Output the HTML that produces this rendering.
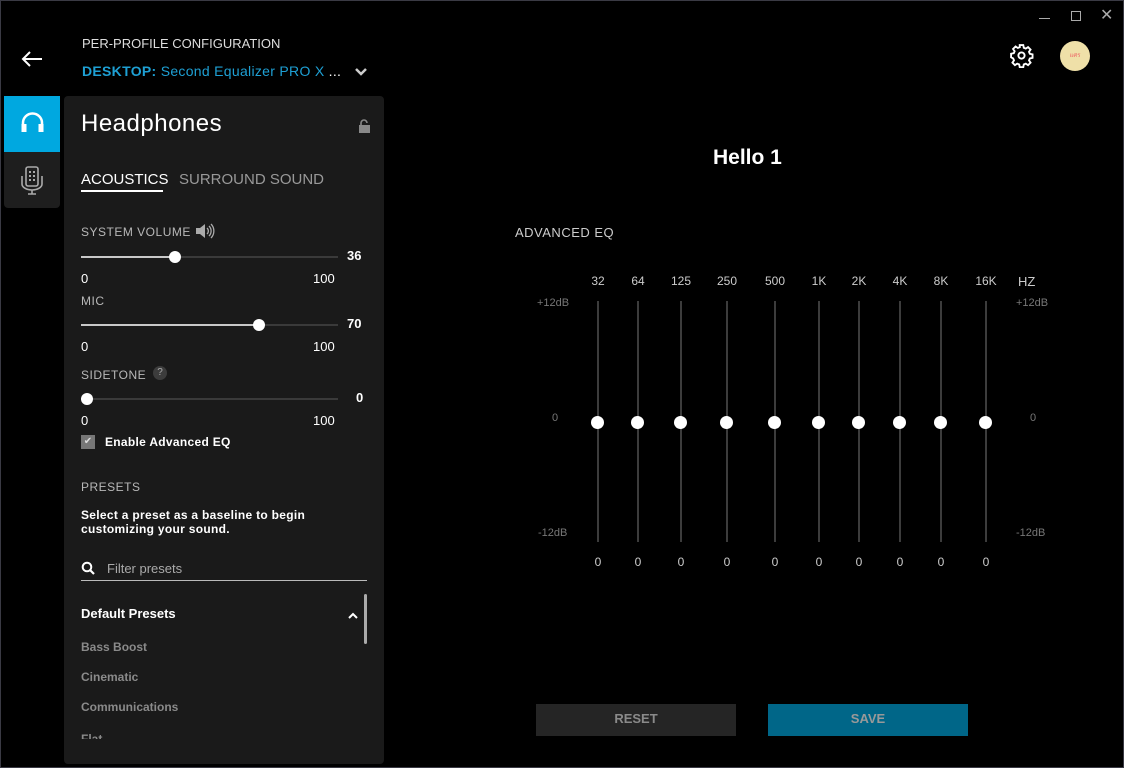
<!DOCTYPE html>
<html><head><meta charset="utf-8"><style>
*{margin:0;padding:0;box-sizing:border-box}
body{width:1124px;height:768px;background:#000;font-family:"Liberation Sans",sans-serif;position:relative;overflow:hidden;color:#fff}
.a{position:absolute;white-space:nowrap}
.frame{position:absolute;left:0;top:0;width:1124px;height:768px;border:1px solid #3a3a44;pointer-events:none}
.panel{position:absolute;left:64px;top:96px;width:320px;height:668px;background:#1a1a1a;border-radius:4px}
.lbl{font-size:12px;color:#b8b8b8;letter-spacing:.5px}
.num{font-size:13px;color:#fff}
.trk{position:absolute;height:2px;background:#3a3a3a}
.fill{position:absolute;height:2px;background:#c8c8c8}
.knob{position:absolute;width:12px;height:12px;border-radius:50%;background:#fff}
.eqt{position:absolute;top:301px;width:2px;height:241px;background:#3c3c3c}
.eqk{position:absolute;top:416px;width:13px;height:13px;border-radius:50%;background:#fff}
.fq{position:absolute;top:274px;font-size:12px;color:#ccc;transform:translateX(-50%)}
.zv{position:absolute;top:555px;font-size:12px;color:#ccc;transform:translateX(-50%)}
.db{position:absolute;font-size:11px;color:#777}
.pr{position:absolute;left:81px;font-size:12px;color:#8a8a8a;font-weight:bold}
</style></head><body>
<div class="frame"></div>
<div class="a" style="left:1039px;top:18px;width:11px;height:1px;background:#aaa"></div>
<div class="a" style="left:1071px;top:11px;width:10px;height:10px;border:1.5px solid #aaa"></div>
<div class="a" style="left:1100px;top:5px;font-size:16px;color:#aaa">✕</div>
<svg class="a" style="left:1009px;top:43px" width="25" height="25" viewBox="0 0 24 24" fill="none" stroke="#fff" stroke-width="1.8"><circle cx="12" cy="12" r="3"/><path d="M10.3 2h3.4l.5 2.6 1.9.8 2.2-1.5 2.4 2.4-1.5 2.2.8 1.9 2.6.5v3.4l-2.6.5-.8 1.9 1.5 2.2-2.4 2.4-2.2-1.5-1.9.8-.5 2.6h-3.4l-.5-2.6-1.9-.8-2.2 1.5-2.4-2.4 1.5-2.2-.8-1.9L2 13.7v-3.4l2.6-.5.8-1.9-1.5-2.2 2.4-2.4 2.2 1.5 1.900-.8z"/></svg>
<div class="a" style="left:1060px;top:41px;width:30px;height:30px;border-radius:50%;background:#efe0a8;font-size:6px;color:#e66;text-align:center;line-height:30px">แศร</div>
<svg class="a" style="left:20px;top:50px" width="24" height="18" viewBox="0 0 24 18" fill="none" stroke="#fff" stroke-width="2"><path d="M22 9H3M10 2L3 9l7 7"/></svg>
<div class="a" style="left:82px;top:36px;font-size:13px;color:#ddd">PER-PROFILE CONFIGURATION</div>
<div class="a" style="left:82px;top:63px;font-size:14px;color:#1ea0d4;letter-spacing:.3px"><b>DESKTOP:</b> Second Equalizer PRO X <span style="color:#fff">...</span></div>
<svg class="a" style="left:355px;top:68px" width="12" height="8" viewBox="0 0 12 8"><path d="M1 1l5 5 5-5" stroke="#ccc" stroke-width="2.5" fill="none"/></svg>
<div class="a" style="left:4px;top:96px;width:56px;height:56px;background:#00a8e0"></div>
<svg class="a" style="left:20px;top:111px" width="25" height="24" viewBox="0 0 25 24" fill="none"><path d="M3 18v-6a9.5 9.5 0 0 1 19 0v6" stroke="#fff" stroke-width="2.5"/><rect x="1.5" y="13" width="5" height="8" fill="#fff"/><rect x="18.5" y="13" width="5" height="8" fill="#fff"/></svg>
<div class="a" style="left:4px;top:152px;width:56px;height:56px;background:#1e1e1e;border-radius:0 0 4px 4px"></div>
<svg class="a" style="left:19px;top:166px" width="26" height="30" viewBox="0 0 26 30" fill="none" stroke="#aaa" stroke-width="1.6"><rect x="7" y="1" width="12" height="19" rx="2"/><path d="M3 10v8a10 6 0 0 0 20 0v-8M13 24v4M9 28h8"/><g fill="#aaa" stroke="none"><rect x="10" y="5" width="2" height="2"/><rect x="14" y="5" width="2" height="2"/><rect x="10" y="9" width="2" height="2"/><rect x="14" y="9" width="2" height="2"/><rect x="10" y="13" width="2" height="2"/><rect x="14" y="13" width="2" height="2"/></g></svg>
<div class="panel"></div>
<div class="a" style="left:81px;top:110px;font-size:24px;color:#fff;letter-spacing:.5px">Headphones</div>
<svg class="a" style="left:358px;top:119px" width="13" height="14" viewBox="0 0 13 14"><path d="M3 6V4a3 3 0 0 1 6 0" stroke="#888" stroke-width="1.6" fill="none"/><rect x="1" y="6" width="11" height="8" fill="#888"/></svg>
<div class="a" style="left:81px;top:171px;font-size:15px;color:#fff">ACOUSTICS</div>
<div class="a" style="left:81px;top:190px;width:82px;height:2px;background:#fff"></div>
<div class="a" style="left:179px;top:171px;font-size:15px;color:#999">SURROUND SOUND</div>
<div class="a lbl" style="left:81px;top:225px">SYSTEM VOLUME</div>
<svg class="a" style="left:195px;top:223px" width="20" height="16" viewBox="0 0 20 16"><path d="M1 5h4l5-4v14l-5-4H1z" fill="#aaa"/><path d="M12 5a4 4 0 0 1 0 6M14 3a7 7 0 0 1 0 10M16 1a10 10 0 0 1 0 14" stroke="#aaa" stroke-width="1.3" fill="none"/></svg>
<div class="trk" style="left:81px;top:256px;width:257px"></div><div class="fill" style="left:81px;top:256px;width:94px"></div><div class="knob" style="left:169px;top:251px"></div>
<div class="a num" style="left:347px;top:248px;font-weight:bold">36</div>
<div class="a num" style="left:81px;top:271px">0</div><div class="a num" style="left:313px;top:271px">100</div>
<div class="a lbl" style="left:81px;top:294px">MIC</div>
<div class="trk" style="left:81px;top:324px;width:257px"></div><div class="fill" style="left:81px;top:324px;width:178px"></div><div class="knob" style="left:253px;top:319px"></div>
<div class="a num" style="left:347px;top:316px;font-weight:bold">70</div>
<div class="a num" style="left:81px;top:339px">0</div><div class="a num" style="left:313px;top:339px">100</div>
<div class="a lbl" style="left:81px;top:368px">SIDETONE</div>
<div class="a" style="left:153px;top:366px;width:14px;height:14px;border-radius:50%;background:#3c3c3c;color:#aaa;font-size:10px;text-align:center;line-height:14px">?</div>
<div class="trk" style="left:81px;top:398px;width:257px"></div><div class="knob" style="left:81px;top:393px"></div>
<div class="a num" style="left:356px;top:390px;font-weight:bold">0</div>
<div class="a num" style="left:81px;top:413px">0</div><div class="a num" style="left:313px;top:413px">100</div>
<div class="a" style="left:81px;top:435px;width:14px;height:14px;background:#777;color:#ddd;font-size:10px;text-align:center;line-height:14px">✔</div>
<div class="a" style="left:105px;top:435px;font-size:12px;font-weight:bold;color:#fff;letter-spacing:.3px">Enable Advanced EQ</div>
<div class="a lbl" style="left:81px;top:480px">PRESETS</div>
<div class="a" style="left:81px;top:508px;font-size:12px;font-weight:bold;color:#fff;line-height:14px;letter-spacing:.3px">Select a preset as a baseline to begin<br>customizing your sound.</div>
<svg class="a" style="left:81px;top:561px" width="14" height="14" viewBox="0 0 14 14"><circle cx="6" cy="6" r="4.3" stroke="#fff" stroke-width="2" fill="none"/><path d="M9 9l4 4" stroke="#fff" stroke-width="2.2"/></svg>
<div class="a" style="left:107px;top:561px;font-size:13px;color:#aaa">Filter presets</div>
<div class="a" style="left:81px;top:580px;width:286px;height:1px;background:#bbb"></div>
<div class="a" style="left:81px;top:606px;font-size:13px;font-weight:bold;color:#fff">Default Presets</div>
<svg class="a" style="left:348px;top:612px" width="10" height="7" viewBox="0 0 10 7"><path d="M1 6l4-4 4 4" stroke="#fff" stroke-width="2" fill="none"/></svg>
<div class="a" style="left:364px;top:594px;width:3px;height:50px;background:#aaa;border-radius:2px"></div>
<div class="pr" style="top:640px">Bass Boost</div>
<div class="pr" style="top:670px">Cinematic</div>
<div class="pr" style="top:700px">Communications</div>
<div class="a" style="left:64px;top:730px;width:300px;height:9px;overflow:hidden"><div class="pr" style="left:17px;top:2px">Flat</div></div>
<div class="a" style="left:713px;top:146px;font-size:21px;font-weight:bold">Hello 1</div>
<div class="a" style="left:515px;top:225px;font-size:13px;color:#ccc;letter-spacing:.5px">ADVANCED EQ</div>
<div class="a" style="left:1018px;top:274px;font-size:13px;color:#ccc">HZ</div>
<div class="db" style="left:537px;top:297px">+12dB</div><div class="db" style="left:1016px;top:297px">+12dB</div>
<div class="db" style="left:552px;top:412px">0</div><div class="db" style="left:1030px;top:412px">0</div>
<div class="db" style="left:538px;top:527px">-12dB</div><div class="db" style="left:1016px;top:527px">-12dB</div>
<div class="eqt" style="left:597px"></div><div class="eqk" style="left:591px"></div><div class="fq" style="left:598px">32</div><div class="zv" style="left:598px">0</div>
<div class="eqt" style="left:637px"></div><div class="eqk" style="left:631px"></div><div class="fq" style="left:638px">64</div><div class="zv" style="left:638px">0</div>
<div class="eqt" style="left:680px"></div><div class="eqk" style="left:674px"></div><div class="fq" style="left:681px">125</div><div class="zv" style="left:681px">0</div>
<div class="eqt" style="left:726px"></div><div class="eqk" style="left:720px"></div><div class="fq" style="left:727px">250</div><div class="zv" style="left:727px">0</div>
<div class="eqt" style="left:774px"></div><div class="eqk" style="left:768px"></div><div class="fq" style="left:775px">500</div><div class="zv" style="left:775px">0</div>
<div class="eqt" style="left:818px"></div><div class="eqk" style="left:812px"></div><div class="fq" style="left:819px">1K</div><div class="zv" style="left:819px">0</div>
<div class="eqt" style="left:858px"></div><div class="eqk" style="left:852px"></div><div class="fq" style="left:859px">2K</div><div class="zv" style="left:859px">0</div>
<div class="eqt" style="left:899px"></div><div class="eqk" style="left:893px"></div><div class="fq" style="left:900px">4K</div><div class="zv" style="left:900px">0</div>
<div class="eqt" style="left:940px"></div><div class="eqk" style="left:934px"></div><div class="fq" style="left:941px">8K</div><div class="zv" style="left:941px">0</div>
<div class="eqt" style="left:985px"></div><div class="eqk" style="left:979px"></div><div class="fq" style="left:986px">16K</div><div class="zv" style="left:986px">0</div>
<div class="a" style="left:536px;top:704px;width:200px;height:32px;background:#252525;color:#8a8a8a;font-size:13px;font-weight:bold;text-align:center;line-height:30px">RESET</div>
<div class="a" style="left:768px;top:704px;width:200px;height:32px;background:#006688;color:#999;font-size:13px;font-weight:bold;text-align:center;line-height:30px">SAVE</div>
</body></html>
